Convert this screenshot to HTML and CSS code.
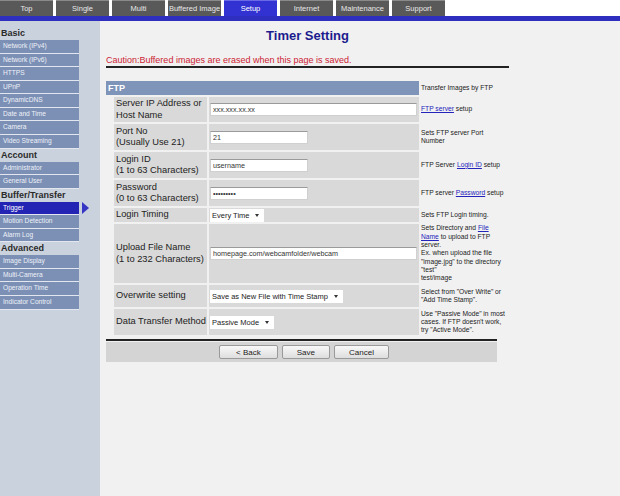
FILE: index.html
```html
<!DOCTYPE html>
<html lang="en">
<head>
    <meta charset="UTF-8">
    <title>Timer Setting</title>
    <link rel="stylesheet" href="styles.css">
</head>
<body>
    <div class="tabs">
        <a class="tab">Top</a>
        <a class="tab">Single</a>
        <a class="tab">Multi</a>
        <a class="tab">Buffered Image</a>
        <a class="tab current">Setup</a>
        <a class="tab">Internet</a>
        <a class="tab">Maintenance</a>
        <a class="tab">Support</a>
    </div>
    <div class="tabline"></div>

    <div class="page">
        <nav class="side">
            <div class="side-head">Basic</div>
            <a class="side-item">Network (IPv4)</a>
            <a class="side-item">Network (IPv6)</a>
            <a class="side-item">HTTPS</a>
            <a class="side-item">UPnP</a>
            <a class="side-item">DynamicDNS</a>
            <a class="side-item">Date and Time</a>
            <a class="side-item">Camera</a>
            <a class="side-item">Video Streaming</a>
            <div class="side-head">Account</div>
            <a class="side-item">Administrator</a>
            <a class="side-item">General User</a>
            <div class="side-head">Buffer/Transfer</div>
            <a class="side-item active">Trigger</a>
            <a class="side-item">Motion Detection</a>
            <a class="side-item">Alarm Log</a>
            <div class="side-head">Advanced</div>
            <a class="side-item">Image Display</a>
            <a class="side-item">Multi-Camera</a>
            <a class="side-item">Operation Time</a>
            <a class="side-item">Indicator Control</a>
        </nav>

        <main class="content">
            <h1 class="title">Timer Setting</h1>
            <p class="caution">Caution:Buffered images are erased when this page is saved.</p>

            <div class="form">
                <div class="section">FTP</div>
                <div class="desc">Transfer Images by FTP</div>

                <div></div>
                <div class="label">Server IP Address or<br>Host Name</div>
                <div class="value"><input class="text wide" type="text" value="xxx.xxx.xx.xx"></div>
                <div class="desc"><span><a href="#">FTP server</a> setup</span></div>

                <div></div>
                <div class="label">Port No<br>(Usually Use 21)</div>
                <div class="value"><input class="text short" type="text" value="21"></div>
                <div class="desc">Sets FTP server Port Number</div>

                <div></div>
                <div class="label">Login ID<br>(1 to 63 Characters)</div>
                <div class="value"><input class="text short" type="text" value="username"></div>
                <div class="desc"><span>FTP Server <a href="#">Login ID</a> setup</span></div>

                <div></div>
                <div class="label">Password<br>(0 to 63 Characters)</div>
                <div class="value"><input class="text short" type="password" value="password1"></div>
                <div class="desc"><span>FTP server <a href="#">Password</a> setup</span></div>

                <div></div>
                <div class="label">Login Timing</div>
                <div class="value">
                    <span class="select"><select><option>Every Time</option></select></span>
                </div>
                <div class="desc">Sets FTP Login timing.</div>

                <div></div>
                <div class="label">Upload File Name<br>(1 to 232 Characters)</div>
                <div class="value"><input class="text wide" type="text" value="homepage.com/webcamfolder/webcam"></div>
                <div class="desc"><span>Sets Directory and <a href="#">File Name</a> to upload to FTP server.<br>Ex. when upload the file "image.jpg" to the directory "test"<br>test/image</span></div>

                <div></div>
                <div class="label">Overwrite setting</div>
                <div class="value">
                    <span class="select"><select><option>Save as New File with Time Stamp</option></select></span>
                </div>
                <div class="desc">Select from "Over Write" or "Add Time Stamp".</div>

                <div></div>
                <div class="label">Data Transfer Method</div>
                <div class="value">
                    <span class="select"><select><option>Passive Mode</option></select></span>
                </div>
                <div class="desc">Use "Passive Mode" in most cases. If FTP doesn't work, try "Active Mode".</div>
            </div>

            <div class="rule"></div>
            <div class="actions">
                <button class="btn back">&lt; Back</button>
                <button class="btn">Save</button>
                <button class="btn">Cancel</button>
            </div>
        </main>
    </div>
</body>
</html>
```

FILE: styles.css
```css
body {
    margin: 0;
    font-family: "Liberation Sans", Arial, sans-serif;
    background: white;
    color: #222;
}
.tabs {
    display: flex;
    gap: 3px;
    height: 16px;
}
.tab {
    width: 53px;
    display: flex;
    align-items: center;
    justify-content: center;
    background: #595959;
    border-top: 1px solid #8a8a8a;
    box-sizing: border-box;
    color: #e8e8e8;
    font-size: 7.5px;
    white-space: nowrap;
}
.tab.current {
    background: #3232d2;
    border-top-color: #6a6ae6;
    color: white;
}
.tabline {
    height: 5px;
    background: #2f2fbf;
}
.page {
    display: flex;
    min-height: calc(100vh - 21px);
}
.side {
    width: 100px;
    flex-shrink: 0;
    background: #cad2dd;
    padding-top: 6px;
}
.side-head {
    height: 13px;
    line-height: 13px;
    font-size: 9px;
    font-weight: bold;
    color: #2a2a2a;
    padding-left: 1px;
}
.side-item {
    display: block;
    position: relative;
    width: 79px;
    height: 13.57px;
    line-height: 12px;
    border-bottom: 1.57px solid #e2e7ef;
    background: #7c90b6;
    color: #eef1f7;
    font-size: 6.6px;
    padding-left: 3px;
    box-sizing: border-box;
    white-space: nowrap;
}
.side-item.active {
    background: #2424b4;
    color: white;
}
.side-item.active::after {
    content: "";
    position: absolute;
    left: 82px;
    top: 0;
    border-left: 7px solid #3636c4;
    border-top: 6px solid transparent;
    border-bottom: 6px solid transparent;
}
.content {
    flex: 1;
    background: #f1f1f1;
    padding: 7px 0 0 6px;
}
.title {
    width: 403px;
    margin: 0;
    text-align: center;
    font-size: 13px;
    line-height: 16px;
    color: #1c1c8e;
}
.caution {
    width: 403px;
    margin: 11px 0 0;
    font-size: 9px;
    line-height: 11px;
    color: #cc2233;
    border-bottom: 2px solid #222;
}
.form {
    display: grid;
    grid-template-columns: 6px 93px 210px 85px;
    grid-template-rows: 14px 25px 26px 26px 26px 14px 59px 22px 26px;
    gap: 2px;
    margin-top: 13px;
}
.section {
    grid-column: 1 / span 3;
    background: #7f94b9;
    color: white;
    font-weight: bold;
    font-size: 9px;
    line-height: 14px;
    padding-left: 2px;
}
.label {
    display: flex;
    align-items: center;
    background: #d9d9d9;
    font-size: 9.3px;
    line-height: 11.5px;
    padding-left: 2px;
    white-space: nowrap;
}
.value {
    display: flex;
    align-items: center;
    background: #d9d9d9;
    padding-left: 1px;
}
.desc {
    display: flex;
    align-items: center;
    font-size: 6.7px;
    line-height: 8.3px;
    color: #222;
}
.desc a {
    color: #2424bb;
}
.text {
    height: 13px;
    box-sizing: border-box;
    border: 1px solid #d0d0d0;
    border-top-color: #9a9a9a;
    background: white;
    font-family: "Liberation Sans", Arial, sans-serif;
    font-size: 7.2px;
    color: #333;
    padding: 0 2px;
    margin: 0;
}
.text.wide {
    width: 207px;
}
.text.short {
    width: 98px;
}
.select {
    position: relative;
    display: inline-block;
}
.select select {
    appearance: none;
    -webkit-appearance: none;
    height: 13px;
    border: none;
    background: white;
    font-family: "Liberation Sans", Arial, sans-serif;
    font-size: 7.5px;
    color: #222;
    padding: 0 14px 0 2px;
    margin: 0;
    display: block;
}
.select::after {
    content: "";
    position: absolute;
    right: 5px;
    top: 5px;
    border-top: 3px solid #333;
    border-left: 2.5px solid transparent;
    border-right: 2.5px solid transparent;
}
.rule {
    width: 391px;
    height: 2px;
    background: #222;
    margin-top: 4px;
}
.actions {
    width: 391px;
    height: 20px;
    margin-top: 1px;
    background: #d4d4d4;
    display: flex;
    align-items: center;
    justify-content: center;
    gap: 4px;
    padding-left: 5px;
    box-sizing: border-box;
}
.btn {
    height: 14px;
    padding: 0 14px;
    font-family: "Liberation Sans", Arial, sans-serif;
    font-size: 8px;
    color: #222;
    background: linear-gradient(#f8f8f8, #dedede);
    border: 1px solid #9a9a9a;
    border-radius: 2px;
}
.btn.back {
    padding: 0 16px;
}
```
